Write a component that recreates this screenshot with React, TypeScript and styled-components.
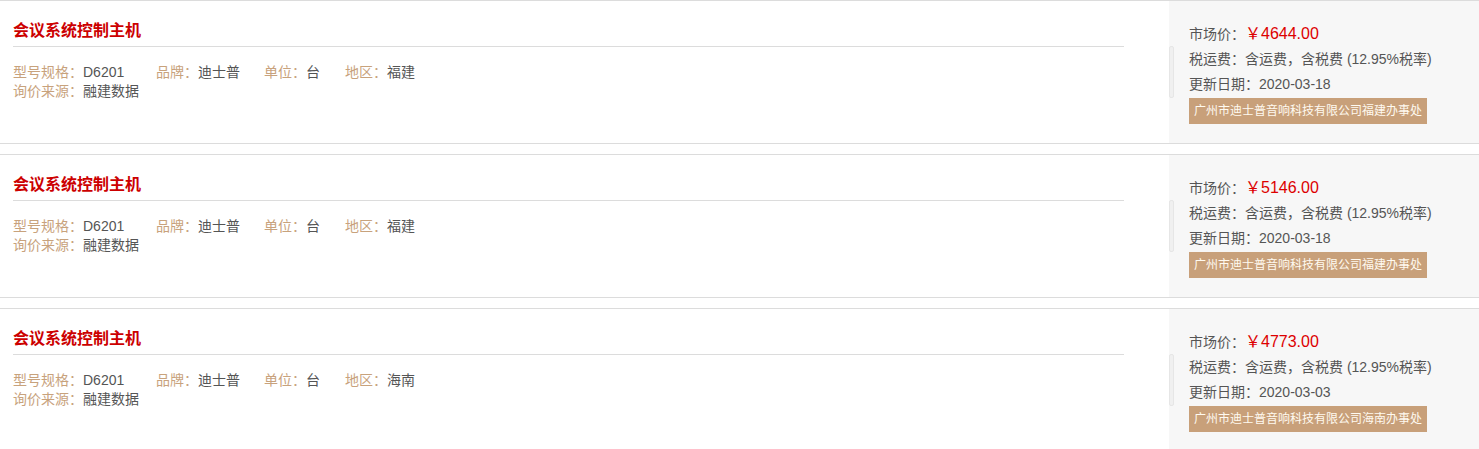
import React from 'react';
import styled, { createGlobalStyle } from 'styled-components';

const GlobalStyle = createGlobalStyle`
  body {
    margin: 0;
    background: #fff;
    font-family: 'Liberation Sans', 'Noto Sans CJK SC', sans-serif;
    color: #555;
  }
`;

const List = styled.div`
  width: 1479px;
`;

const Card = styled.div`
  display: flex;
  height: 142px;
  border-top: 1px solid #dcdcdc;
  border-bottom: 1px solid #dcdcdc;
  margin-bottom: 10px;
`;

const Main = styled.div`
  flex: 1;
  padding: 15px 45px 0 13px;
`;

const Title = styled.div`
  height: 30px;
  line-height: 30px;
  font-size: 16px;
  font-weight: 700;
  color: #cc0000;
  border-bottom: 1px solid #dcdcdc;
`;

const Attrs = styled.div`
  margin-top: 16px;
  font-size: 14px;
  line-height: 19px;
`;

const AttrRow = styled.div`
  display: grid;
  grid-template-columns: 143px 108px 81px auto;
`;

const Attr = styled.span`
  white-space: nowrap;
`;

const Label = styled.span`
  color: #c8a27c;
`;

const Value = styled.span`
  color: #555;
`;

const Side = styled.div`
  width: 310px;
  background: #f7f7f7;
  display: flex;
  align-items: center;
`;

const Grip = styled.div`
  width: 3px;
  height: 50px;
  margin-right: 15px;
  border: 1px solid #e6e6e6;
  border-radius: 2px;
  background: #f0f0f0;
`;

const Info = styled.div`
  font-size: 14px;
  color: #555;
`;

const InfoLine = styled.div`
  line-height: 25px;
`;

const Price = styled.span`
  color: #dd0000;
  font-size: 16px;
`;

const Dealer = styled.div`
  display: inline-block;
  margin-top: 1px;
  padding: 0 5px;
  height: 26px;
  line-height: 26px;
  font-size: 12px;
  color: #fffaf0;
  background: #c8a07a;
  white-space: nowrap;
`;

type Item = {
  price: string;
  date: string;
  region: string;
};

const items: Item[] = [
  { price: '4644.00', date: '2020-03-18', region: '福建' },
  { price: '5146.00', date: '2020-03-18', region: '福建' },
  { price: '4773.00', date: '2020-03-03', region: '海南' },
];

const ProductCard = ({ item }: { item: Item }) => (
  <Card>
    <Main>
      <Title>会议系统控制主机</Title>
      <Attrs>
        <AttrRow>
          <Attr>
            <Label>型号规格：</Label>
            <Value>D6201</Value>
          </Attr>
          <Attr>
            <Label>品牌：</Label>
            <Value>迪士普</Value>
          </Attr>
          <Attr>
            <Label>单位：</Label>
            <Value>台</Value>
          </Attr>
          <Attr>
            <Label>地区：</Label>
            <Value>{item.region}</Value>
          </Attr>
        </AttrRow>
        <AttrRow>
          <Attr>
            <Label>询价来源：</Label>
            <Value>融建数据</Value>
          </Attr>
        </AttrRow>
      </Attrs>
    </Main>
    <Side>
      <Grip />
      <Info>
        <InfoLine>
          市场价：<Price>￥{item.price}</Price>
        </InfoLine>
        <InfoLine>税运费：含运费，含税费 (12.95%税率)</InfoLine>
        <InfoLine>更新日期：{item.date}</InfoLine>
        <Dealer>广州市迪士普音响科技有限公司{item.region}办事处</Dealer>
      </Info>
    </Side>
  </Card>
);

export default function App() {
  return (
    <>
      <GlobalStyle />
      <List>
        {items.map((item, i) => (
          <ProductCard key={i} item={item} />
        ))}
      </List>
    </>
  );
}
